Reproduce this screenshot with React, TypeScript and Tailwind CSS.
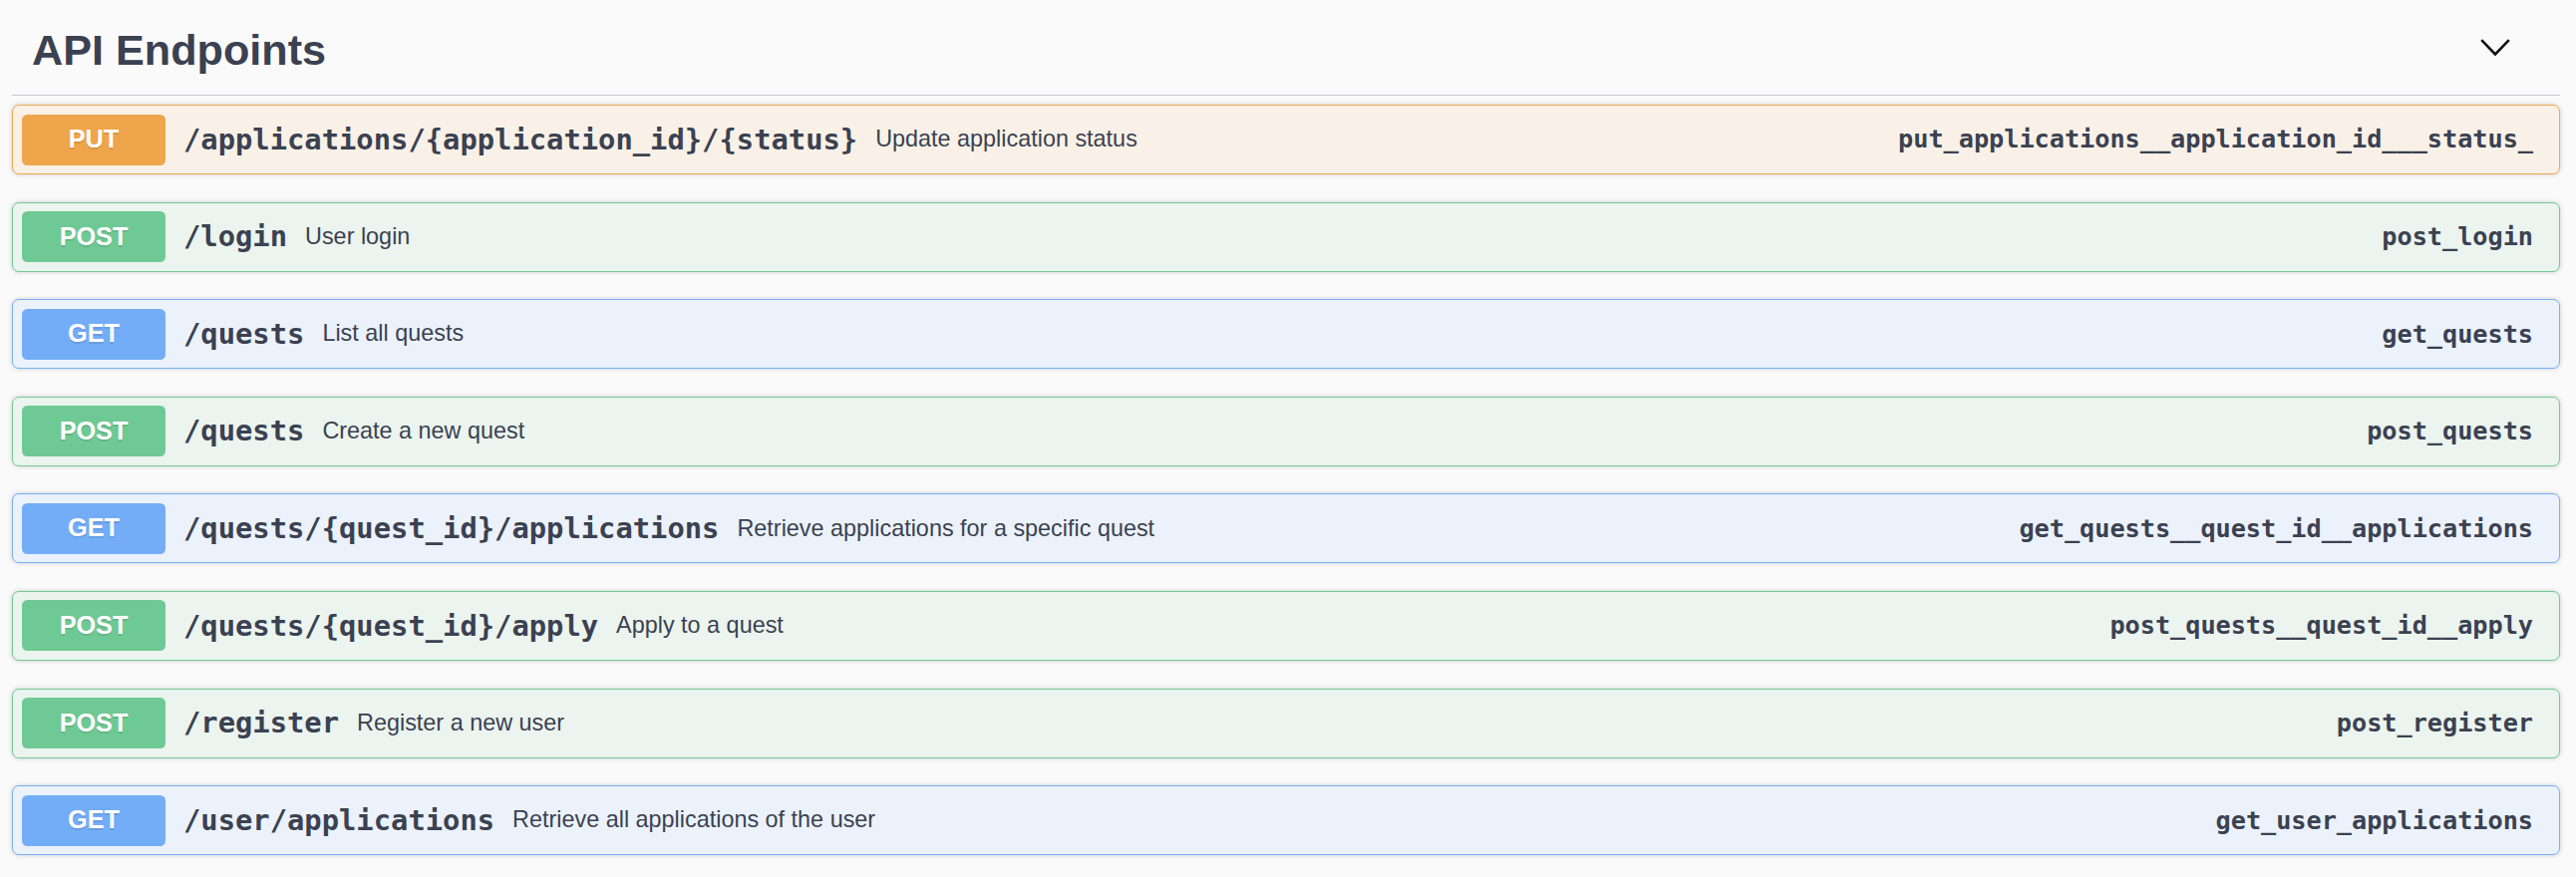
import React from "react";

type Method = "PUT" | "POST" | "GET";

const endpoints: { method: Method; path: string; desc: string; opId: string }[] = [
  { method: "PUT", path: "/applications/{application_id}/{status}", desc: "Update application status", opId: "put_applications__application_id___status_" },
  { method: "POST", path: "/login", desc: "User login", opId: "post_login" },
  { method: "GET", path: "/quests", desc: "List all quests", opId: "get_quests" },
  { method: "POST", path: "/quests", desc: "Create a new quest", opId: "post_quests" },
  { method: "GET", path: "/quests/{quest_id}/applications", desc: "Retrieve applications for a specific quest", opId: "get_quests__quest_id__applications" },
  { method: "POST", path: "/quests/{quest_id}/apply", desc: "Apply to a quest", opId: "post_quests__quest_id__apply" },
  { method: "POST", path: "/register", desc: "Register a new user", opId: "post_register" },
  { method: "GET", path: "/user/applications", desc: "Retrieve all applications of the user", opId: "get_user_applications" },
];

const rowStyles: Record<Method, { row: string; badge: string }> = {
  PUT: { row: "bg-[#f9f1e7] border-[#eea84f]", badge: "bg-[#efa54b]" },
  POST: { row: "bg-[#ebf4ee] border-[#74c994]", badge: "bg-[#6fc994]" },
  GET: { row: "bg-[#ebf2fb] border-[#78aff6]", badge: "bg-[#73adf7]" },
};

const mono = "font-['DejaVu_Sans_Mono',monospace]";
const sans = "font-['Liberation_Sans',Arial,sans-serif]";

export default function App() {
  return (
    <div className={`min-h-[880px] w-full bg-[#fafafa] pl-[12px] pr-[16px] text-[#3b4151] ${sans}`}>
      <div className="flex items-start justify-between border-b border-[#c6c7cb] pt-[24px] pb-[19px] pl-[20px] pr-[50px]">
        <h3 className={`text-[43.2px] leading-[52px] font-bold ${sans}`}>API Endpoints</h3>
        <svg className="mt-[15px]" width="30" height="17" viewBox="0 0 30 17" fill="none">
          <polyline points="1.2,1.2 15,15.5 28.8,1.2" stroke="#111" strokeWidth="2.6" strokeLinecap="butt" strokeLinejoin="miter" />
        </svg>
      </div>
      <div className="mt-[9px] flex flex-col gap-[27.6px]">
        {endpoints.map((e, i) => {
          const s = rowStyles[e.method];
          return (
            <div
              key={i}
              className={`flex h-[70px] items-center rounded-[7px] border p-[9px] shadow-[0_0_5px_rgba(0,0,0,0.19)] ${s.row}`}
            >
              <div
                className={`flex h-[51px] w-[144px] shrink-0 items-center justify-center rounded-[5.4px] text-[25.2px] font-bold text-white [text-shadow:0_1.8px_0_rgba(0,0,0,0.1)] ${s.badge} ${sans}`}
              >
                {e.method}
              </div>
              <span className={`px-[18px] text-[28.8px] font-bold leading-none ${mono}`}>{e.path}</span>
              <span className={`text-[23.4px] leading-none ${sans}`}>{e.desc}</span>
              <span className={`ml-auto pr-[17px] text-[25.2px] font-bold leading-none ${mono}`}>{e.opId}</span>
            </div>
          );
        })}
      </div>
    </div>
  );
}
